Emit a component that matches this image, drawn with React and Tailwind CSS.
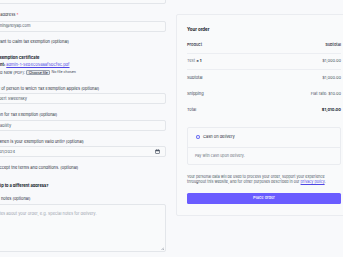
import React from 'react'

function Label({ children, className = '' }) {
  return <div className={`h-[5px] leading-[5px] text-[4px] text-[#1f2937] whitespace-nowrap ${className}`}>{children}</div>
}

function Field({ children, className = '', muted }) {
  return (
    <div
      className={`h-[11px] rounded-[2px] border border-[#e3e6ea] bg-[#f9fafb] px-[4px] flex items-center text-[4px] whitespace-nowrap ${muted ? 'text-[#9ca3af]' : 'text-[#4b5563]'} ${className}`}
    >
      {children}
    </div>
  )
}

function Box() {
  return <span className="inline-block w-[4px] h-[4px] rounded-[1px] border border-[#d1d5db] bg-white shrink-0" />
}

function Row({ left, right, border, strong }) {
  return (
    <div className={`h-[16px] flex items-center justify-between text-[4px] ${border ? 'border-b border-[#eceef2]' : ''}`}>
      <span className="text-[#374151]">{left}</span>
      <span className={strong ? 'font-bold text-[#111827]' : 'text-[#4b5563]'}>{right}</span>
    </div>
  )
}

export default function App() {
  return (
    <div className="w-[343px] h-[257px] overflow-hidden bg-[#f8f9fb] font-['Inter',sans-serif]">
      <div className="ml-[-11px] w-[363px] grid grid-cols-[177px_176px] gap-[10px] items-start">
        {/* left column */}
        <div className="mt-[-7px] flex flex-col">
          <Field>Doe</Field>
          <Label className="mt-[7.5px]">Email address <span className="text-red-500">*</span></Label>
          <Field className="mt-[4px]">admin@relyap.com</Field>

          <div className="mt-[8px] h-[5px] flex items-center gap-[2px] text-[4px] text-[#1f2937] whitespace-nowrap">
            <Box />
            <span>I want to claim tax exemption (optional)</span>
          </div>

          <div className="mt-[10px] h-[5px] leading-[5px] text-[4px] font-bold text-[#111827] whitespace-nowrap">
            Tax Exemption Certificate
          </div>
          <div className="mt-[2.5px] h-[5px] leading-[5px] text-[4px] text-[#1f2937] whitespace-nowrap">
            <span className="font-bold">Current: </span>
            <span className="text-[#4f46e5] underline">admin-1-5ed4c058aaf5bcf9c.pdf</span>
          </div>
          <div className="mt-[3px] h-[5px] flex items-center gap-[1px] text-[4px] text-[#374151] whitespace-nowrap">
            <span>Upload New (PDF):</span>
            <span className="h-[5px] px-[1.5px] leading-[4px] text-[3.6px] text-[#111827] bg-[#e5e7eb] border border-[#9ca3af] rounded-[1px]">Choose file</span>
            <span className="text-[3.6px]">No file chosen</span>
          </div>

          <Label className="mt-[10.5px]">Name of person to which Tax Exemption applies (optional)</Label>
          <Field className="mt-[2.5px]">Robert Sweensky</Field>

          <Label className="mt-[7.5px]">Reason for Tax Exemption (optional)</Label>
          <Field className="mt-[3.5px]">Disability</Field>

          <Label className="mt-[7.5px]">Until when is your exemption valid until? (optional)</Label>
          <Field className="mt-[2.5px] justify-between">
            <span>12/01/2024</span>
            <svg width="5" height="5" viewBox="0 0 10 10" className="mr-[1px]">
              <rect x="1" y="2" width="8" height="7" rx="1" fill="none" stroke="#4b5563" strokeWidth="1.3" />
              <rect x="1" y="2" width="8" height="2.5" fill="#4b5563" />
              <rect x="3" y="0.5" width="1" height="2" fill="#4b5563" />
              <rect x="6" y="0.5" width="1" height="2" fill="#4b5563" />
            </svg>
          </Field>

          <div className="mt-[8.5px] h-[5px] flex items-center gap-[2px] text-[4px] text-[#1f2937] whitespace-nowrap">
            <Box />
            <span>I accept the terms and conditions. (optional)</span>
          </div>

          <div className="mt-[13px] h-[5px] flex items-center gap-[2px] text-[4px] font-bold text-[#111827] whitespace-nowrap">
            <Box />
            <span>Ship to a different address?</span>
          </div>

          <Label className="mt-[7px]">Order notes (optional)</Label>
          <div className="relative mt-[3px] h-[48px] rounded-[2px] border border-[#e3e6ea] bg-[#f9fafb] px-[4px] pt-[6px] text-[4px] text-[#9ca3af] whitespace-nowrap">
            Notes about your order, e.g. special notes for delivery.
            <svg width="3" height="3" viewBox="0 0 6 6" className="absolute right-[1px] bottom-[1px]">
              <path d="M6 1 L1 6 M6 4 L4 6" stroke="#6b7280" strokeWidth="1" />
            </svg>
          </div>
        </div>

        {/* right column */}
        <div className="mt-[13.5px] border border-[#eaecf0] rounded-[2px] bg-[#f9fafb] px-[10px] pt-[12px] pb-[11px]">
          <div className="h-[6px] leading-[6px] text-[4.4px] font-bold text-[#111827]">Your order</div>
          <div className="mt-[5px] flex flex-col">
            <div className="h-[16px] flex items-center justify-between text-[4px] font-medium text-[#1f2937] border-b border-[#eceef2]">
              <span>Product</span>
              <span>Subtotal</span>
            </div>
            <Row left={<span><span className="text-[#6b7280]">Test</span> <span className="font-bold text-[#1f2937]">× 1</span></span>} right="$1,000.00" border />
            <Row left="Subtotal" right="$1,000.00" />
            <Row left="Shipping" right="Flat rate: $10.00" />
            <Row left="Total" right="$1,010.00" strong />
          </div>

          <div className="mt-[9px] rounded-[2px] border border-[#eaecf0]">
            <div className="h-[20px] flex items-center gap-[3px] pl-[8px] border-b border-[#eaecf0] text-[4px] text-[#1f2937]">
              <span className="w-[4px] h-[4px] rounded-full bg-[#6366f1] flex items-center justify-center">
                <span className="w-[1.5px] h-[1.5px] rounded-full bg-white" />
              </span>
              <span>Cash on delivery</span>
            </div>
            <div className="h-[16px] flex items-center pl-[7px] text-[3.7px] text-[#6b7280]">
              Pay with cash upon delivery.
            </div>
          </div>

          <p className="mt-[9px] text-[3.7px] leading-[5.6px] text-[#4b5563] whitespace-nowrap">
            Your personal data will be used to process your order, support your experience
            <br />
            throughout this website, and for other purposes described in our{' '}
            <span className="text-[#4f46e5] underline">privacy policy</span>.
          </p>

          <div className="mt-[8px] h-[11px] rounded-[1.5px] bg-[#6a5cff] flex items-center justify-center text-[4px] font-medium text-white">
            Place order
          </div>
        </div>
      </div>
    </div>
  )
}
